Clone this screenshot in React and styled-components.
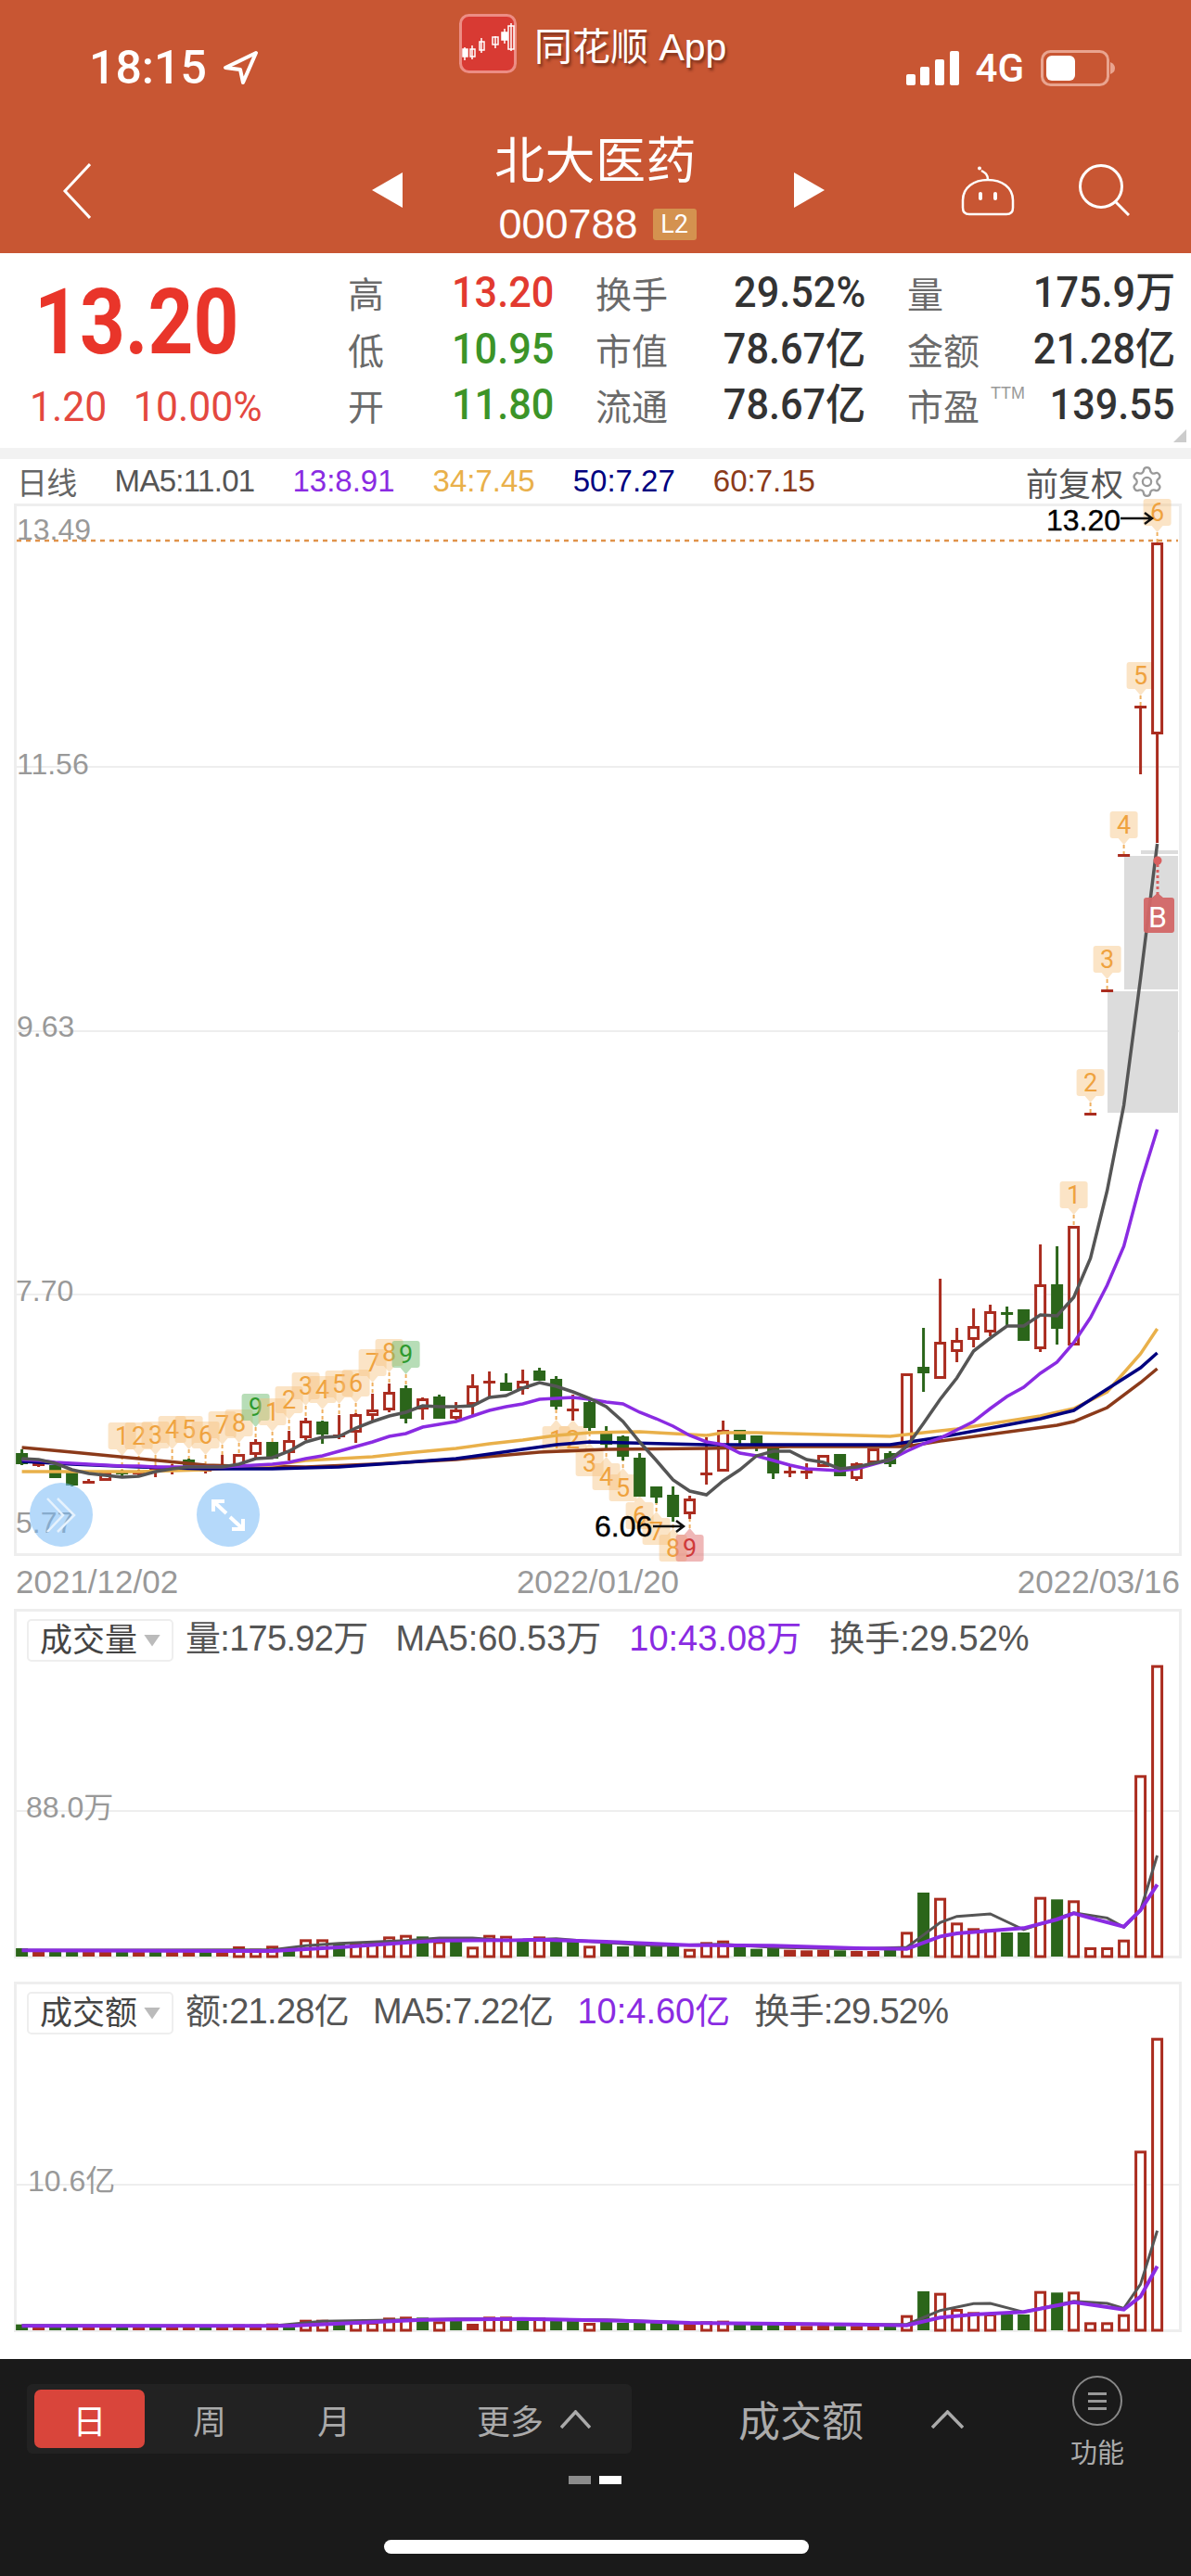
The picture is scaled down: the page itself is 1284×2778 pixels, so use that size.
import React from 'react'
import styled, { createGlobalStyle } from 'styled-components'
import { Settings } from 'lucide-react'

const SANS = '"Liberation Sans", "Noto Sans CJK SC", sans-serif'
const NUM = 'Roboto, "Noto Sans CJK SC", sans-serif'
const RED = '#AA2C1F'
const GREEN = '#2B651A'

// candle: [type, high, bodyTop, bodyBottom, low] in page pixels
const candles = [
  ['g', 1563, 1567, 1579, 1580], ['r', 1576, 1578, 1581, 1582], ['g', 1580, 1580, 1594, 1594], ['g', 1588, 1588, 1602, 1603],
  ['r', 1595, 1597, 1599, 1600], ['r', 1586, 1587, 1597, 1597], ['g', 1585, 1587, 1589, 1593], ['r', 1585, 1587, 1589, 1592],
  ['r', 1580, 1581, 1587, 1593], ['r', 1579, 1581, 1586, 1590], ['g', 1573, 1574, 1582, 1582], ['r', 1580, 1584, 1586, 1589],
  ['r', 1569, 1579, 1582, 1583], ['r', 1568, 1568, 1582, 1582], ['r', 1552, 1555, 1569, 1572], ['g', 1555, 1555, 1573, 1573],
  ['r', 1543, 1553, 1567, 1575], ['r', 1529, 1532, 1551, 1553], ['g', 1532, 1533, 1547, 1557], ['r', 1526, 1547, 1549, 1552],
  ['r', 1524, 1525, 1545, 1556], ['r', 1503, 1520, 1527, 1533], ['r', 1492, 1501, 1521, 1523], ['g', 1494, 1497, 1530, 1535],
  ['r', 1507, 1508, 1520, 1531], ['g', 1504, 1506, 1530, 1530], ['r', 1512, 1520, 1530, 1531], ['r', 1482, 1494, 1515, 1526],
  ['r', 1479, 1489, 1491, 1506], ['g', 1481, 1491, 1500, 1500], ['r', 1477, 1489, 1498, 1504], ['g', 1475, 1478, 1489, 1489],
  ['g', 1484, 1487, 1517, 1520], ['r', 1504, 1519, 1521, 1532], ['g', 1510, 1512, 1540, 1543], ['g', 1538, 1545, 1558, 1563],
  ['g', 1548, 1549, 1571, 1575], ['g', 1567, 1572, 1614, 1614], ['g', 1603, 1603, 1615, 1621], ['g', 1603, 1612, 1636, 1641],
  ['r', 1613, 1616, 1633, 1638], ['r', 1550, 1588, 1591, 1601], ['r', 1532, 1542, 1587, 1587], ['g', 1542, 1542, 1553, 1558],
  ['g', 1548, 1548, 1557, 1565], ['g', 1560, 1560, 1589, 1595], ['r', 1580, 1586, 1588, 1593], ['r', 1578, 1586, 1588, 1595],
  ['r', 1569, 1569, 1582, 1582], ['g', 1568, 1568, 1592, 1592], ['r', 1577, 1578, 1595, 1597], ['r', 1562, 1562, 1578, 1578],
  ['g', 1565, 1567, 1579, 1582], ['r', 1481, 1481, 1560, 1560], ['g', 1432, 1474, 1481, 1501], ['r', 1379, 1447, 1487, 1487],
  ['r', 1432, 1445, 1458, 1469], ['r', 1411, 1430, 1445, 1453], ['r', 1407, 1414, 1437, 1441], ['g', 1409, 1415, 1417, 1430],
  ['g', 1412, 1412, 1446, 1446], ['r', 1342, 1385, 1455, 1458], ['g', 1344, 1385, 1433, 1450], ['r', 1322, 1322, 1451, 1451],
  ['r', 1200, 1200, 1202, 1202], ['r', 1067, 1067, 1069, 1069], ['r', 921, 921, 923, 923], ['r', 761, 761, 763, 835],
  ['r', 585, 585, 792, 909],
]

const ma5 = [1573, 1574, 1578, 1585, 1589, 1591, 1593, 1592, 1587, 1584, 1582, 1582, 1582, 1579, 1573, 1572, 1565, 1555, 1550, 1549, 1540, 1533, 1527, 1523, 1516, 1517, 1517, 1516, 1507, 1505, 1497, 1491, 1495, 1501, 1508, 1517, 1533, 1555, 1575, 1596, 1608, 1612, 1597, 1585, 1570, 1565, 1565, 1574, 1577, 1584, 1582, 1578, 1574, 1560, 1535, 1509, 1486, 1457, 1443, 1430, 1430, 1418, 1419, 1399, 1357, 1284, 1192, 1055, 910]
const ma13 = [1574, 1575, 1577, 1578, 1579, 1580, 1581, 1581, 1582, 1582, 1582, 1582, 1582, 1581, 1580, 1579, 1577, 1573, 1570, 1565, 1560, 1555, 1549, 1546, 1539, 1536, 1533, 1527, 1521, 1517, 1514, 1509, 1508, 1507, 1509, 1512, 1514, 1523, 1530, 1538, 1548, 1555, 1558, 1567, 1570, 1575, 1580, 1584, 1585, 1586, 1584, 1579, 1574, 1565, 1557, 1551, 1542, 1533, 1519, 1506, 1496, 1481, 1469, 1448, 1421, 1386, 1344, 1276, 1218]
const ma34 = [[0, 1587], [2, 1587], [7, 1587], [11, 1585], [13, 1582], [15, 1580], [17, 1575], [19, 1573], [21, 1571], [23, 1567], [26, 1562], [28, 1557], [30, 1553], [32, 1548], [34, 1545], [37, 1544], [41, 1548], [42, 1545], [44, 1545], [52, 1549], [56, 1541], [61, 1527], [63, 1519], [65, 1501], [67, 1460], [68, 1433]]
const ma50 = [[0, 1576], [3, 1579], [7, 1582], [11, 1584], [15, 1584], [19, 1582], [23, 1577], [26, 1573], [30, 1563], [32, 1558], [34, 1555], [41, 1558], [52, 1558], [55, 1550], [58, 1540], [61, 1530], [63, 1521], [65, 1498], [67, 1475], [68, 1459]]
const ma60 = [[0, 1561], [3, 1566], [7, 1573], [11, 1580], [13, 1581], [17, 1582], [21, 1579], [26, 1574], [31, 1566], [35, 1563], [41, 1562], [46, 1560], [53, 1560], [55, 1554], [62, 1537], [63, 1533], [65, 1518], [67, 1491], [68, 1476]]

// tag: [candle index, number, tag top, side, tone]
const tags = [
  [6, 1, 1534, 'up'], [7, 2, 1534, 'up'], [8, 3, 1533, 'up'], [9, 4, 1527, 'up'], [10, 5, 1527, 'up'], [11, 6, 1533, 'up'],
  [12, 7, 1522, 'up'], [13, 8, 1520, 'up'], [14, 9, 1503, 'up', 'green'], [15, 1, 1508, 'up'], [16, 2, 1495, 'up'], [17, 3, 1480, 'up'],
  [18, 4, 1484, 'up'], [19, 5, 1478, 'up'], [20, 6, 1477, 'up'], [21, 7, 1455, 'up'], [22, 8, 1444, 'up'], [23, 9, 1446, 'up', 'green'],
  [32, 1, 1538, 'down'], [33, 2, 1538, 'down'], [34, 3, 1563, 'down'], [35, 4, 1578, 'down'], [36, 5, 1590, 'down'], [37, 6, 1620, 'down'],
  [38, 7, 1637, 'down'], [39, 8, 1655, 'down'], [40, 9, 1655, 'down', 'red'],
  [63, 1, 1274, 'up'], [64, 2, 1153, 'up'], [65, 3, 1020, 'up'], [66, 4, 875, 'up'], [67, 5, 714, 'up'], [68, 6, 538, 'up'],
]

const barTypes = 'grggrrgrgr' + 'rgrrrrgrrg' + 'rrrrgrgrrr' + 'grggrggggg' + 'rrrgggrrrg' + 'rrgrgrrrrg' + 'grgrrrrrr'
const volTops = [1143, 1155, 1150, 1150, 1155, 1155, 1150, 1155, 1155, 1155, 1155, 1152, 1152, 1137, 1145, 1135, 1145, 1114, 1114, 1130, 1125, 1125, 1105, 1100, 1105, 1120, 1118, 1138, 1100, 1103, 1120, 1105, 1122, 1118, 1135, 1125, 1137, 1132, 1135, 1135, 1145, 1123, 1118, 1140, 1145, 1140, 1148, 1150, 1148, 1150, 1152, 1152, 1148, 1090, 963, 980, 1060, 1078, 1082, 1092, 1092, 977, 985, 988, 1140, 1140, 1115, 583, 227]
const amtTops = [1160, 1168, 1168, 1168, 1168, 1168, 1168, 1168, 1168, 1168, 1168, 1166, 1165, 1160, 1160, 1157, 1163, 1145, 1145, 1155, 1152, 1152, 1138, 1135, 1138, 1150, 1148, 1158, 1135, 1135, 1147, 1138, 1147, 1145, 1155, 1148, 1155, 1152, 1155, 1155, 1158, 1150, 1148, 1158, 1162, 1158, 1162, 1165, 1162, 1165, 1165, 1165, 1163, 1130, 1053, 1058, 1110, 1120, 1125, 1128, 1128, 1052, 1057, 1054, 1153, 1153, 1127, 598, 233]

const volGray = [[0, 1150], [15, 1148], [17, 1135], [19, 1127], [23, 1118], [25, 1110], [27, 1110], [29, 1118], [32, 1112], [35, 1125], [38, 1135], [42, 1130], [45, 1140], [50, 1145], [53, 1140], [54, 1100], [55, 1060], [56, 1040], [58, 1032], [60, 1083], [63, 1028], [65, 1045], [66, 1075], [67, 1020], [68, 843]]
const volPurple = [[0, 1150], [15, 1152], [19, 1140], [23, 1125], [25, 1118], [30, 1117], [31, 1115], [35, 1122], [40, 1133], [45, 1135], [50, 1143], [53, 1145], [55, 1105], [56, 1095], [60, 1078], [62, 1050], [63, 1030], [64, 1045], [66, 1073], [67, 1020], [68, 937]]
const amtGray = [[0, 1163], [15, 1165], [18, 1150], [23, 1145], [26, 1142], [35, 1145], [40, 1155], [50, 1160], [53, 1160], [55, 1115], [57, 1093], [58, 1092], [60, 1120], [63, 1085], [65, 1092], [66, 1108], [67, 1030], [68, 857]]
const amtPurple = [[0, 1165], [16, 1165], [20, 1155], [24, 1145], [30, 1142], [36, 1148], [40, 1155], [50, 1160], [53, 1163], [55, 1138], [57, 1128], [60, 1120], [63, 1088], [66, 1112], [67, 1070], [68, 972]]

const xAt = (i) => 23.6 + 18 * i
const linePoints = (ys) => ys.map((y, i) => `${xAt(i)},${y}`).join(' ')
const pairPoints = (pairs) => pairs.map(([i, y]) => `${xAt(i)},${y}`).join(' ')

const GlobalStyle = createGlobalStyle`
  html, body { margin: 0; padding: 0; background: #fff; }
  body { font-family: ${SANS}; }
`

const Page = styled.div`
  width: 1284px;
  height: 2778px;
  overflow: hidden;
  background: #fff;
  display: flex;
  flex-direction: column;
`

const Header = styled.header`
  height: 273px;
  background: #c85633;
  color: #fff;
  flex-shrink: 0;
`

const StatusRow = styled.div`
  height: 146px;
  display: grid;
  grid-template-columns: 495px auto 1fr;
  padding-right: 82px;
`

const StatusLeft = styled.div`
  display: flex;
  align-items: center;
  gap: 16px;
  padding-left: 96px;
`

const Time = styled.span`
  font: 500 50px ${NUM};
`

const Banner = styled.div`
  display: flex;
  align-items: center;
  gap: 19px;
  margin-top: 15px;
  align-self: start;
`

const BannerText = styled.span`
  font: 400 41px ${SANS};
  text-shadow: 2px 3px 3px rgba(60, 20, 10, 0.55);
`

const StatusRight = styled.div`
  display: flex;
  align-items: center;
  justify-content: flex-end;
  gap: 18px;
`

const Carrier = styled.span`
  font: 500 42px ${NUM};
`

const NavRow = styled.div`
  height: 127px;
  box-sizing: border-box;
  padding-bottom: 9px;
  display: grid;
  grid-template-columns: 401px 33px 422px 33px 146px 60px 68px 55px;
  align-items: center;
`

const BackCell = styled.div`
  padding-left: 67px;
  display: flex;
  padding-top: 1px;
`

const NavArrow = styled.div`
  width: 33px;
  height: 38px;
  background: #fff;
  clip-path: ${(p) => (p.$dir === 'left' ? 'polygon(100% 0, 100% 100%, 0 50%)' : 'polygon(0 0, 100% 50%, 0 100%)')};
`

const StockBlock = styled.div`
  align-self: start;
  padding-right: 6px;
  display: flex;
  flex-direction: column;
  align-items: center;
`

const StockName = styled.div`
  font: 400 54px/56px ${SANS};
  letter-spacing: 0.5px;
`

const StockCode = styled.div`
  display: flex;
  align-items: center;
  gap: 16px;
  margin-top: 23px;
  margin-left: 4px;
  font: 400 45px/34px ${SANS};
`

const LevelBadge = styled.span`
  width: 47px;
  height: 34px;
  background: #d4924f;
  border-radius: 3px;
  font: 400 27px/34px ${NUM};
  text-align: center;
`

const QuoteBar = styled.section`
  height: 210px;
  display: flex;
  position: relative;
  flex-shrink: 0;
`

const PriceBlock = styled.div`
  width: 375px;
  padding-left: 37px;
  box-sizing: border-box;
`

const BigPrice = styled.div`
  margin-top: 19px;
  font: 700 98px/112px ${NUM};
  color: #e9352a;
  transform: scaleX(0.87);
  transform-origin: left center;
`

const PriceChange = styled.div`
  display: flex;
  gap: 30px;
  margin: 10px 0 0 -5px;
  font: 400 45px/50px ${NUM};
  color: #e4483f;
  transform: scaleX(0.95);
  transform-origin: left center;
`

const StatGrid = styled.div`
  display: grid;
  grid-template-columns: 222px 291px 289px;
  grid-auto-rows: 60.5px;
  column-gap: 45px;
  padding-top: 12px;
`

const Stat = styled.div`
  display: flex;
  justify-content: space-between;
  align-items: center;
  position: relative;
`

const StatLabel = styled.span`
  font: 400 39px/44px ${SANS};
  color: #6a6a6a;
  padding-top: 8px;
`

const StatValue = styled.span`
  font: 500 46px/56px ${NUM};
  color: ${(p) => p.$color || '#333'};
  transform: scaleX(0.94);
  transform-origin: right center;
  white-space: nowrap;
`

const TtmMark = styled.span`
  position: absolute;
  left: 90px;
  top: 8px;
  font: 400 18px ${SANS};
  color: #999;
`

const CornerMark = styled.div`
  position: absolute;
  right: 5px;
  bottom: 6px;
  width: 14px;
  height: 14px;
  background: #ccc;
  clip-path: polygon(100% 0, 100% 100%, 0 100%);
`

const Divider = styled.div`
  height: 12px;
  background: #f2f2f2;
  flex-shrink: 0;
`

const ChartToolbar = styled.div`
  height: 48px;
  display: flex;
  align-items: center;
  gap: 41px;
  padding: 0 29px 0 18px;
  font: 400 33px ${SANS};
  flex-shrink: 0;
`

const MaLabel = styled.span`
  color: ${(p) => p.$color || '#555'};
  white-space: nowrap;
  letter-spacing: ${(p) => (p.$tight ? '-0.7px' : '0')};
`

const AdjustGroup = styled.div`
  margin-left: auto;
  display: flex;
  align-items: center;
  gap: 7px;
  font-size: 35px;
  color: #555;
`

const ChartBox = styled.div`
  position: relative;
  box-sizing: border-box;
  width: 1259px;
  height: 1135px;
  margin-left: 15px;
  border: 3px solid #eee;
  flex-shrink: 0;
`

const PlotSvg = styled.svg`
  display: block;
  overflow: visible;
`

const AxisLabel = styled.text`
  font: 400 32px ${SANS};
  fill: #999;
`

const PriceNote = styled.text`
  font: 400 32px ${SANS};
  fill: #000;
  stroke: #000;
  stroke-width: 0.4px;
`

const TagNumber = styled.text`
  font: 400 27px ${NUM};
  text-anchor: middle;
`

const BuyLetter = styled.text`
  font: 400 32px ${NUM};
  fill: #fff;
  text-anchor: middle;
`

const FloatButton = styled.div`
  position: absolute;
  left: ${(p) => p.$left}px;
  top: 1053px;
  width: 68px;
  height: 69px;
  border-radius: 50%;
  background: rgba(120, 185, 245, 0.55);
  display: flex;
  align-items: center;
  justify-content: center;
`

const DateRow = styled.div`
  height: 57px;
  display: flex;
  justify-content: space-between;
  padding: 5px 12px 0 17px;
  box-sizing: border-box;
  font: 400 35px/46px ${SANS};
  color: #999;
  flex-shrink: 0;
`

const SubPanel = styled.section`
  box-sizing: border-box;
  width: 1259px;
  height: ${(p) => p.$height}px;
  margin-left: 15px;
  margin-top: ${(p) => p.$top || 0}px;
  border: 3px solid #eee;
  flex-shrink: 0;
`

const PanelHeader = styled.div`
  height: 57px;
  box-sizing: border-box;
  padding: 8px 0 0 11px;
  display: flex;
  align-items: flex-start;
`

const IndicatorChip = styled.div`
  box-sizing: border-box;
  width: 158px;
  height: 46px;
  border: 2px solid #eee;
  border-radius: 5px;
  display: flex;
  align-items: center;
  padding-left: 12px;
  gap: 7px;
  font: 400 35px/42px ${SANS};
  color: #444;
`

const ChipCaret = styled.span`
  width: 18px;
  height: 13px;
  background: #bbb;
  clip-path: polygon(0 0, 100% 0, 50% 100%);
`

const Legend = styled.div`
  display: flex;
  gap: ${(p) => p.$gap}px;
  margin-left: 13px;
  font: 400 38px/42px ${SANS};
`

const Tail = styled.div`
  height: 29px;
  flex-shrink: 0;
`

const BottomBar = styled.footer`
  height: 234px;
  background: #1a1a1a;
  flex-shrink: 0;
  display: flex;
  flex-direction: column;
`

const ControlRow = styled.div`
  height: 126px;
  padding: 18px 0 0 29px;
  box-sizing: border-box;
  display: flex;
  align-items: flex-start;
`

const TabGroup = styled.div`
  width: 652px;
  height: 75px;
  margin-top: 9px;
  box-sizing: border-box;
  padding: 6px 8px;
  background: #222;
  border-radius: 6px;
  display: flex;
  align-items: center;
`

const Tab = styled.div`
  width: ${(p) => p.$width}px;
  height: 63px;
  display: flex;
  align-items: center;
  justify-content: center;
  font: 400 36px ${SANS};
  color: ${(p) => (p.$active ? '#fff' : '#aaa')};
  background: ${(p) => (p.$active ? '#d9453b' : 'transparent')};
  border-radius: 7px;
`

const MoreTab = styled.div`
  margin-left: auto;
  padding-right: 36px;
  display: flex;
  align-items: center;
  gap: 18px;
  font: 400 36px ${SANS};
  color: #aaa;
`

const IndicatorPicker = styled.div`
  margin: 9px 0 0 115px;
  display: flex;
  align-items: center;
  gap: 73px;
  height: 75px;
  font: 400 45px ${SANS};
  color: #aaa;
`

const MenuButton = styled.div`
  margin-left: 114px;
  width: 60px;
  display: flex;
  flex-direction: column;
  align-items: center;
  gap: 14px;
  font: 400 29px/32px ${SANS};
  color: #aaa;
  white-space: nowrap;
`

const MenuRing = styled.div`
  box-sizing: border-box;
  width: 54px;
  height: 54px;
  border: 2px solid #888;
  border-radius: 50%;
  display: flex;
  flex-direction: column;
  align-items: center;
  justify-content: center;
  gap: 5px;
`

const MenuLine = styled.span`
  width: 20px;
  height: 3px;
  background: #999;
`

const PagerDots = styled.div`
  display: flex;
  justify-content: center;
  gap: 9px;
  height: 9px;
  padding-right: 2px;
`

const PagerDot = styled.span`
  width: 24px;
  height: 9px;
  background: ${(p) => (p.$on ? '#fff' : '#8c8c8c')};
`

const HomeBar = styled.div`
  width: 458px;
  height: 15px;
  margin: 60px 0 0 414px;
  border-radius: 8px;
  background: #fff;
`

function Candle({ i, data }) {
  const [type, high, top, bottom, low] = data
  const x = xAt(i)
  const color = type === 'r' ? RED : GREEN
  const h = bottom - top
  const solid = type === 'g' || h <= 4
  return (
    <g>
      <line x1={x} x2={x} y1={high} y2={low} stroke={color} strokeWidth="3" />
      {solid ? (
        <rect x={x - 6.5} y={top} width="13" height={Math.max(h, 3)} fill={color} />
      ) : (
        <rect x={x - 5} y={top + 1.5} width="10" height={h - 3} fill="#fff" stroke={color} strokeWidth="3" />
      )}
    </g>
  )
}

const tagTone = {
  orange: { fill: '#f5bf78', text: '#efa23e', opacity: 0.42 },
  green: { fill: '#6fbb6f', text: '#2e9a2e', opacity: 0.5 },
  red: { fill: '#e27c7c', text: '#cf3a3a', opacity: 0.55 },
}

function SequenceTag({ i, n, top, side, tone = 'orange' }) {
  const x = xAt(i)
  const c = candles[i]
  const t = tagTone[tone]
  const h = 29
  const tip = side === 'up' ? top + h + 7 : top - 7
  const edge = side === 'up' ? top + h : top
  const end = side === 'up' ? c[1] : c[4]
  return (
    <g>
      <line x1={x} x2={x} y1={tip} y2={end} stroke="#efb060" strokeWidth="2" strokeDasharray="4 3" />
      <path
        d={`M${x - 15} ${top + 3} q0 -3 3 -3 h24 q3 0 3 3 v${h - 6} q0 3 -3 3 h-24 q-3 0 -3 -3 z M${x - 6} ${edge} L${x} ${tip} L${x + 6} ${edge} z`}
        fill={t.fill}
        fillOpacity={t.opacity}
      />
      <TagNumber x={x} y={top + 24} fill={t.text}>{n}</TagNumber>
    </g>
  )
}

function Bars({ tops, toY, base }) {
  return tops.map((py, i) => {
    const x = xAt(i)
    const y = toY(py)
    const h = base - y
    const color = barTypes[i] === 'r' ? RED : GREEN
    if (barTypes[i] === 'g' || h < 8) {
      return <rect key={i} x={x - 6.5} y={y} width="13" height={h} fill={color} />
    }
    return <rect key={i} x={x - 5} y={y + 1.5} width="10" height={h - 1.5} fill="#fff" stroke={color} strokeWidth="3" />
  })
}

function MainChart() {
  return (
    <ChartBox>
      <PlotSvg width="1253" height="1129" viewBox="18 546 1253 1129">
        {[827, 1112, 1396].map((y) => (
          <line key={y} x1="18" x2="1271" y1={y} y2={y} stroke="#eee" strokeWidth="2" />
        ))}
        <line x1="18" x2="1270" y1="583" y2="583" stroke="#e0924a" strokeWidth="2.5" strokeDasharray="5 5" />
        <rect x="1212" y="923" width="58" height="144" fill="#dcdcdc" />
        <rect x="1194" y="1069" width="76" height="131" fill="#dcdcdc" />
        <rect x="1230" y="917" width="40" height="4" fill="#dcdcdc" />

        <AxisLabel x="18" y="582">13.49</AxisLabel>
        <AxisLabel x="18" y="835">11.56</AxisLabel>
        <AxisLabel x="18" y="1118">9.63</AxisLabel>
        <AxisLabel x="17" y="1403">7.70</AxisLabel>
        <AxisLabel x="17" y="1653">5.77</AxisLabel>

        {tags.map(([i, n, top, side, tone]) => (
          <SequenceTag key={`${i}-${n}`} i={i} n={n} top={top} side={side} tone={tone} />
        ))}
        {candles.map((c, i) => (
          <Candle key={i} i={i} data={c} />
        ))}

        <polyline points={pairPoints(ma60)} fill="none" stroke="#8b3a1a" strokeWidth="3.5" />
        <polyline points={pairPoints(ma34)} fill="none" stroke="#e9b04a" strokeWidth="3.5" />
        <polyline points={pairPoints(ma50)} fill="none" stroke="#00007f" strokeWidth="3.5" />
        <polyline points={linePoints(ma13)} fill="none" stroke="#8a2be2" strokeWidth="3.5" />
        <polyline points={linePoints(ma5)} fill="none" stroke="#555" strokeWidth="3.5" />

        <circle cx="1248" cy="928" r="4.5" fill="#d95f5f" />
        <line x1="1248" x2="1248" y1="932" y2="966" stroke="#d95f5f" strokeWidth="3" strokeDasharray="3 3" />
        <path d="M1233 971 q0 -3 3 -3 h6 l6 -5 l6 5 h9 q3 0 3 3 v32 q0 3 -3 3 h-27 q-3 0 -3 -3 z" fill="#d26666" fillOpacity="0.95" />
        <BuyLetter x="1248" y="1000">B</BuyLetter>

        <PriceNote x="1128" y="572">13.20</PriceNote>
        <path d="M1208 559 H1242 M1234 553 L1242 559 L1234 565" fill="none" stroke="#111" strokeWidth="2.5" />
        <PriceNote x="641" y="1657">6.06</PriceNote>
        <path d="M704 1646 H737 M729 1640 L737 1646 L729 1652" fill="none" stroke="#111" strokeWidth="2.5" />
      </PlotSvg>
      <FloatButton $left={14}>
        <svg width="34" height="38" viewBox="0 0 34 38" fill="none" stroke="#e6f2fd" strokeWidth="2.5">
          <path d="M2 1 L19 19 L2 37" />
          <path d="M13 1 L31 19 L13 37" />
        </svg>
      </FloatButton>
      <FloatButton $left={194}>
        <svg width="36" height="34" viewBox="0 0 36 34" fill="none" stroke="#fff" strokeWidth="4">
          <path d="M2 13 V2 H14 M2 2 L16 15" />
          <path d="M34 21 V32 H22 M34 32 L20 19" />
        </svg>
      </FloatButton>
    </ChartBox>
  )
}

function SubChart({ viewY, height, tops, toY, base, gridY, label, labelY, labelX, gray, purple }) {
  const pts = (pairs) => pairs.map(([i, py]) => `${xAt(i)},${toY(py)}`).join(' ')
  return (
    <PlotSvg width="1253" height={height} viewBox={`18 ${viewY} 1253 ${height}`}>
      <line x1="18" x2="1271" y1={gridY} y2={gridY} stroke="#eee" strokeWidth="2" />
      <AxisLabel x={labelX} y={labelY}>{label}</AxisLabel>
      <Bars tops={tops} toY={toY} base={base} />
      <polyline points={pts(gray)} fill="none" stroke="#555" strokeWidth="3" />
      <polyline points={pts(purple)} fill="none" stroke="#8a2be2" strokeWidth="4" />
    </PlotSvg>
  )
}

function Logo() {
  return (
    <svg width="62" height="64" viewBox="0 0 62 64">
      <rect x="1.5" y="1.5" width="59" height="61" rx="9" fill="#d83a33" stroke="#ec8d84" strokeWidth="3" />
      <g stroke="#fff" strokeWidth="1.5" fill="none">
        <path d="M6 36 V50 M14 34 V49 M24 26 V42 M39 24 V37 M49 16 V32 M56 10 V40" />
        <rect x="4" y="38" width="5" height="8" fill="#fff" />
        <rect x="12" y="38" width="5" height="8" />
        <rect x="22" y="30" width="5" height="9" />
        <rect x="36" y="25" width="6" height="8" />
        <rect x="46" y="20" width="6" height="8" fill="#fff" />
        <rect x="53" y="13" width="6" height="25" />
      </g>
    </svg>
  )
}

export default function App() {
  const volY = (py) => 1720 + py / 3
  const amtY = (py) => 2120 + py / 3
  return (
    <Page>
      <GlobalStyle />
      <Header>
        <StatusRow>
          <StatusLeft>
            <Time>18:15</Time>
            <svg width="40" height="38" viewBox="0 0 40 38" fill="none" stroke="#fff" strokeWidth="4" strokeLinejoin="round">
              <path d="M37 3 L4 19 L20 21 L23 35 Z" />
            </svg>
          </StatusLeft>
          <Banner>
            <Logo />
            <BannerText>同花顺 App</BannerText>
          </Banner>
          <StatusRight>
            <svg width="57" height="37" viewBox="0 0 57 37" fill="#fff">
              <rect x="0" y="25" width="10" height="12" rx="2" />
              <rect x="15" y="17" width="10" height="20" rx="2" />
              <rect x="31" y="9" width="10" height="28" rx="2" />
              <rect x="47" y="0" width="10" height="37" rx="2" />
            </svg>
            <Carrier>4G</Carrier>
            <svg width="80" height="39" viewBox="0 0 80 39">
              <rect x="1.5" y="1.5" width="71" height="36" rx="9" fill="none" stroke="#e9a48f" strokeWidth="3" />
              <rect x="6" y="6" width="31" height="27" rx="6" fill="#fff" />
              <path d="M75 13 q5 2 5 6.5 q0 4.5 -5 6.5 z" fill="#e9a48f" />
            </svg>
          </StatusRight>
        </StatusRow>
        <NavRow>
          <BackCell>
            <svg width="31" height="60" viewBox="0 0 31 60" fill="none" stroke="#fff" strokeWidth="3">
              <path d="M30 1 L3 30 L30 59" />
            </svg>
          </BackCell>
          <NavArrow $dir="left" />
          <StockBlock>
            <StockName>北大医药</StockName>
            <StockCode>
              000788
              <LevelBadge>L2</LevelBadge>
            </StockCode>
          </StockBlock>
          <NavArrow $dir="right" />
          <div />
          <svg width="60" height="55" viewBox="0 0 60 55" fill="none" stroke="#fff" strokeWidth="2.5">
            <path d="M3 38 C3 24 15 16 30 16 C45 16 57 24 57 38 V46 C57 51 54 53 50 53 H10 C6 53 3 51 3 46 Z" />
            <path d="M30 16 C30 10 27 8 23 6" />
            <circle cx="21" cy="3.5" r="2" fill="#fff" stroke="none" />
            <rect x="20" y="29" width="4" height="9" rx="2" fill="#fff" stroke="none" />
            <rect x="36" y="29" width="4" height="9" rx="2" fill="#fff" stroke="none" />
          </svg>
          <div />
          <svg width="55" height="56" viewBox="0 0 55 56" fill="none" stroke="#fff" strokeWidth="3">
            <circle cx="24" cy="24" r="22.5" />
            <path d="M40 41 L54 55" />
          </svg>
        </NavRow>
      </Header>

      <QuoteBar>
        <PriceBlock>
          <BigPrice>13.20</BigPrice>
          <PriceChange>
            <span>1.20</span>
            <span>10.00%</span>
          </PriceChange>
        </PriceBlock>
        <StatGrid>
          <Stat><StatLabel>高</StatLabel><StatValue $color="#e23a30">13.20</StatValue></Stat>
          <Stat><StatLabel>换手</StatLabel><StatValue>29.52%</StatValue></Stat>
          <Stat><StatLabel>量</StatLabel><StatValue>175.9万</StatValue></Stat>
          <Stat><StatLabel>低</StatLabel><StatValue $color="#3c9428">10.95</StatValue></Stat>
          <Stat><StatLabel>市值</StatLabel><StatValue>78.67亿</StatValue></Stat>
          <Stat><StatLabel>金额</StatLabel><StatValue>21.28亿</StatValue></Stat>
          <Stat><StatLabel>开</StatLabel><StatValue $color="#3c9428">11.80</StatValue></Stat>
          <Stat><StatLabel>流通</StatLabel><StatValue>78.67亿</StatValue></Stat>
          <Stat>
            <StatLabel>市盈</StatLabel>
            <TtmMark>TTM</TtmMark>
            <StatValue>139.55</StatValue>
          </Stat>
        </StatGrid>
        <CornerMark />
      </QuoteBar>
      <Divider />

      <ChartToolbar>
        <MaLabel $color="#666" $tight>日线</MaLabel>
        <MaLabel $tight>MA5:11.01</MaLabel>
        <MaLabel $color="#8a2be2">13:8.91</MaLabel>
        <MaLabel $color="#e9b04a">34:7.45</MaLabel>
        <MaLabel $color="#00007f">50:7.27</MaLabel>
        <MaLabel $color="#8b3a1a">60:7.15</MaLabel>
        <AdjustGroup>
          前复权
          <Settings size={37} color="#999" strokeWidth={1.5} />
        </AdjustGroup>
      </ChartToolbar>

      <MainChart />

      <DateRow>
        <span>2021/12/02</span>
        <span>2022/01/20</span>
        <span>2022/03/16</span>
      </DateRow>

      <SubPanel $height={377}>
        <PanelHeader>
          <IndicatorChip>成交量<ChipCaret /></IndicatorChip>
          <Legend $gap={30}>
            <MaLabel $tight>量:175.92万</MaLabel>
            <MaLabel>MA5:60.53万</MaLabel>
            <MaLabel $color="#8a2be2">10:43.08万</MaLabel>
            <MaLabel>换手:29.52%</MaLabel>
          </Legend>
        </PanelHeader>
        <SubChart
          viewY={1795}
          height={314}
          tops={volTops}
          toY={volY}
          base={2110}
          gridY={1953}
          label="88.0万"
          labelX={28}
          labelY={1960}
          gray={volGray}
          purple={volPurple}
        />
      </SubPanel>

      <SubPanel $height={378} $top={25}>
        <PanelHeader>
          <IndicatorChip>成交额<ChipCaret /></IndicatorChip>
          <Legend $gap={26}>
            <MaLabel $tight>额:21.28亿</MaLabel>
            <MaLabel $tight>MA5:7.22亿</MaLabel>
            <MaLabel $color="#8a2be2">10:4.60亿</MaLabel>
            <MaLabel $tight>换手:29.52%</MaLabel>
          </Legend>
        </PanelHeader>
        <SubChart
          viewY={2197}
          height={315}
          tops={amtTops}
          toY={amtY}
          base={2513}
          gridY={2356}
          label="10.6亿"
          labelX={30}
          labelY={2363}
          gray={amtGray}
          purple={amtPurple}
        />
      </SubPanel>
      <Tail />

      <BottomBar>
        <ControlRow>
          <TabGroup>
            <Tab $width={119} $active>日</Tab>
            <Tab $width={140}>周</Tab>
            <Tab $width={128}>月</Tab>
            <MoreTab>
              更多
              <svg width="33" height="20" viewBox="0 0 33 20" fill="none" stroke="#aaa" strokeWidth="3.5">
                <path d="M1 19 L16.5 2 L32 19" />
              </svg>
            </MoreTab>
          </TabGroup>
          <IndicatorPicker>
            成交额
            <svg width="35" height="20" viewBox="0 0 35 20" fill="none" stroke="#aaa" strokeWidth="3.5">
              <path d="M1 19 L17.5 2 L34 19" />
            </svg>
          </IndicatorPicker>
          <MenuButton>
            <MenuRing>
              <MenuLine />
              <MenuLine />
              <MenuLine />
            </MenuRing>
            功能
          </MenuButton>
        </ControlRow>
        <PagerDots>
          <PagerDot />
          <PagerDot $on />
        </PagerDots>
        <HomeBar />
      </BottomBar>
    </Page>
  )
}
